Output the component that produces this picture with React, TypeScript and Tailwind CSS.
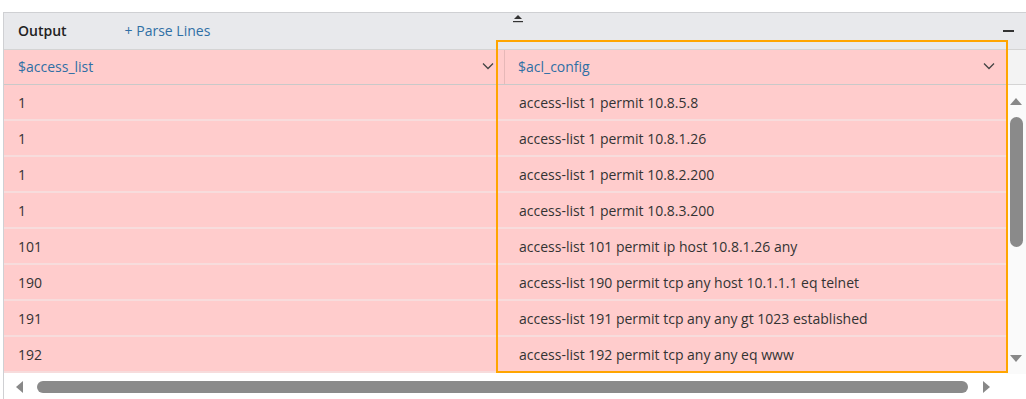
import React from 'react'

const rows = [
  ['1', 'access-list 1 permit 10.8.5.8'],
  ['1', 'access-list 1 permit 10.8.1.26'],
  ['1', 'access-list 1 permit 10.8.2.200'],
  ['1', 'access-list 1 permit 10.8.3.200'],
  ['101', 'access-list 101 permit ip host 10.8.1.26 any'],
  ['190', 'access-list 190 permit tcp any host 10.1.1.1 eq telnet'],
  ['191', 'access-list 191 permit tcp any any gt 1023 established'],
  ['192', 'access-list 192 permit tcp any any eq www'],
]

function Chevron() {
  return (
    <svg width="12" height="8" viewBox="0 0 12 8" fill="none" stroke="#444" strokeWidth="1.3">
      <path d="M1 1.5 L6 6.5 L11 1.5" />
    </svg>
  )
}

export default function App() {
  return (
    <div className="w-[1026px] h-[399px] bg-white pt-[12px] pl-[3px] overflow-hidden text-[14px] text-[#333]" style={{ fontFamily: '"Open Sans", sans-serif' }}>
      <div className="relative h-full border-l border-t border-[#cfd0d3] flex flex-col">
        {/* toolbar */}
        <div className="h-[36px] bg-[#e8e9ec] flex items-center pb-[2px] relative shrink-0">
          <span className="ml-[14px] font-semibold text-[#222]">Output</span>
          <span className="ml-[58px] text-[#2f6fa5]">+ Parse Lines</span>
          <svg className="absolute left-[508px] top-[1px]" width="12" height="9" viewBox="0 0 12 9">
            <path d="M6 1 L10 5 L2 5 Z" fill="#333" />
            <rect x="1" y="7" width="10" height="1.2" fill="#333" />
          </svg>
          <span className="absolute right-[12px] top-[17px] w-[11px] h-[1.5px] bg-[#333]" />
        </div>

        <div className="flex flex-1 min-h-0">
          {/* table */}
          <div className="w-[1002px] flex flex-col">
            <div className="h-[36px] bg-[#ffcccc] flex border-t border-[#d4d4d4] border-b border-b-[#c9c9c9] shrink-0">
              <div className="w-[501px] flex items-center justify-between pl-[14px] pr-[10px] pb-[2px] border-r border-[#e6b8b8]">
                <span className="text-[#2f6fa5]">$access_list</span>
                <Chevron />
              </div>
              <div className="flex-1 flex items-center justify-between pl-[13px] pr-[11px] pb-[2px]">
                <span className="text-[#2f6fa5]">$acl_config</span>
                <Chevron />
              </div>
            </div>
            {rows.map(([a, b], i) => (
              <div key={i} className="h-[36px] bg-[#ffcccc] flex items-center border-b-2 border-[#f7dcdc] shrink-0">
                <div className="w-[501px] pl-[14px]">{a}</div>
                <div className="flex-1 pl-[14px]">{b}</div>
              </div>
            ))}
          </div>
          {/* vertical scrollbar */}
          <div className="flex-1 flex flex-col">
            <div className="h-[36px] bg-[#f3f3f3] border-t border-b border-[#d4d4d4]" />
            <div className="flex-1 bg-[#fafafa] flex flex-col items-center pt-[13px]">
              <svg width="12" height="7" viewBox="0 0 12 7"><path d="M6 0 L12 7 L0 7 Z" fill="#888" /></svg>
              <div className="mt-[12px] w-[13px] h-[130px] rounded-[7px] bg-[#8a8a8a]" />
              <div className="flex-1" />
              <svg className="mb-[12px]" width="12" height="7" viewBox="0 0 12 7"><path d="M0 0 L12 0 L6 7 Z" fill="#888" /></svg>
            </div>
          </div>
        </div>

        {/* horizontal scrollbar */}
        <div className="h-[25px] bg-white flex items-center shrink-0 pl-[12px]">
          <svg width="7" height="12" viewBox="0 0 7 12"><path d="M7 0 L7 12 L0 6 Z" fill="#888" /></svg>
          <div className="ml-[14px] w-[931px] h-[12px] rounded-[6px] bg-[#8a8a8a]" />
          <svg className="ml-[15px]" width="7" height="12" viewBox="0 0 7 12"><path d="M0 0 L0 12 L7 6 Z" fill="#888" /></svg>
        </div>

        {/* selection highlight */}
        <div className="absolute left-[492px] top-[27px] w-[512px] h-[333px] border-2 border-[#ffa500] pointer-events-none" />
      </div>
    </div>
  )
}
